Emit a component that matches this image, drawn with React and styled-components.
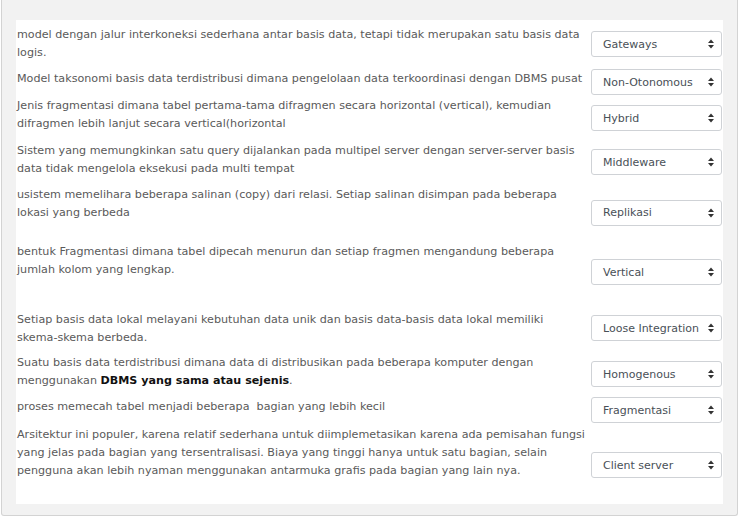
import styled, { createGlobalStyle } from "styled-components";

const GlobalStyle = createGlobalStyle`
  html, body {
    margin: 0;
    padding: 0;
    background: #fff;
  }
  body {
    font-family: "DejaVu Sans", Verdana, sans-serif;
  }
`;

const Frame = styled.div`
  box-sizing: border-box;
  width: 737px;
  height: 516px;
  margin-left: 1px;
  padding: 20px 14px 11px 14px;
  background: #f2f2f2;
  border: 1px solid #d3d3d3;
  border-top: 0;
  border-radius: 0 0 3px 3px;
`;

const Panel = styled.div`
  height: 484px;
  display: flex;
  flex-direction: column;
  background: #fff;
`;

const Row = styled.div`
  display: flex;
  align-items: center;
`;

const TextCell = styled.div`
  flex: 1;
  padding: ${({ $pt }) => $pt}px 4px ${({ $pb }) => $pb}px 1px;
  font-size: 11.15px;
  line-height: 18px;
  color: #5a5a5a;
`;

const Strong = styled.strong`
  font-weight: bold;
  color: #111;
`;

const SelectCell = styled.div`
  width: 131px;
  margin-right: 1px;
`;

const SelectBox = styled.div`
  box-sizing: border-box;
  height: 26px;
  display: flex;
  align-items: center;
  justify-content: space-between;
  padding: 0 7px 0 11px;
  border: 1px solid #cfd2d6;
  border-radius: 3px;
  background: #fff;
  font-size: 11px;
  color: #495057;
  white-space: nowrap;
`;

const Value = styled.span`
  line-height: 1;
`;

const rows = [
  {
    text: "model dengan jalur interkoneksi sederhana antar basis data, tetapi tidak merupakan satu basis data logis.",
    answer: "Gateways",
    pt: 6,
    pb: 6,
  },
  {
    text: "Model taksonomi basis data terdistribusi dimana pengelolaan data terkoordinasi dengan DBMS pusat",
    answer: "Non-Otonomous",
    pt: 2,
    pb: 8,
  },
  {
    text: "Jenis fragmentasi dimana tabel pertama-tama difragmen secara horizontal (vertical), kemudian difragmen lebih lanjut secara vertical(horizontal",
    answer: "Hybrid",
    pt: 1,
    pb: 7,
  },
  {
    text: "Sistem yang memungkinkan satu query dijalankan pada multipel server dengan server-server basis data tidak mengelola eksekusi pada multi tempat",
    answer: "Middleware",
    pt: 2,
    pb: 6,
  },
  {
    text: "usistem memelihara beberapa salinan (copy) dari relasi. Setiap salinan disimpan pada beberapa lokasi yang berbeda",
    answer: "Replikasi",
    pt: 2,
    pb: 19,
  },
  {
    text: "bentuk Fragmentasi dimana tabel dipecah menurun dan setiap fragmen mengandung beberapa jumlah kolom yang lengkap.",
    answer: "Vertical",
    pt: 2,
    pb: 24,
  },
  {
    text: "Setiap basis data lokal melayani kebutuhan data unik dan basis data-basis data lokal memiliki skema-skema berbeda.",
    answer: "Loose Integration",
    pt: 8,
    pb: 6,
  },
  {
    text: (
      <>
        Suatu basis data terdistribusi dimana data di distribusikan pada beberapa komputer dengan
        menggunakan <Strong>DBMS yang sama atau sejenis</Strong>.
      </>
    ),
    answer: "Homogenous",
    pt: 1,
    pb: 5,
  },
  {
    text: "proses memecah tabel menjadi beberapa\u00a0 bagian yang lebih kecil",
    answer: "Fragmentasi",
    pt: 3,
    pb: 9,
  },
  {
    text: "Arsitektur ini populer, karena relatif sederhana untuk diimplemetasikan karena ada pemisahan fungsi yang jelas pada bagian yang tersentralisasi. Biaya yang tinggi hanya untuk satu bagian, selain pengguna akan lebih nyaman menggunakan antarmuka grafis pada bagian yang lain nya.",
    answer: "Client server",
    pt: 1,
    pb: 25,
  },
];

const Arrows = () => (
  <svg width="6" height="10" viewBox="0 0 6 10" aria-hidden="true">
    <polygon points="0,4 3,0.5 6,4" fill="#333" />
    <polygon points="0,6 3,9.5 6,6" fill="#333" />
  </svg>
);

const App = () => {
  return (
    <>
      <GlobalStyle />
      <Frame>
        <Panel>
          {rows.map((row, i) => (
            <Row key={i}>
              <TextCell $pt={row.pt} $pb={row.pb}>
                {row.text}
              </TextCell>
              <SelectCell>
                <SelectBox role="combobox">
                  <Value>{row.answer}</Value>
                  <Arrows />
                </SelectBox>
              </SelectCell>
            </Row>
          ))}
        </Panel>
      </Frame>
    </>
  );
};

export default App;
